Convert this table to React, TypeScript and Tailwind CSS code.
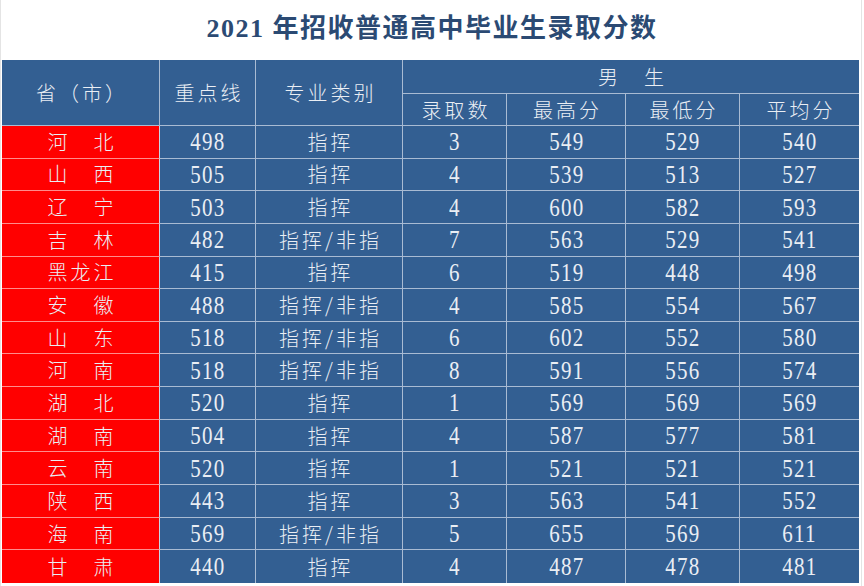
import React from "react";

const rows: [string, string, string, string, string, string, string][] = [
  ["河\u3000北", "498", "指挥", "3", "549", "529", "540"],
  ["山\u3000西", "505", "指挥", "4", "539", "513", "527"],
  ["辽\u3000宁", "503", "指挥", "4", "600", "582", "593"],
  ["吉\u3000林", "482", "指挥/非指", "7", "563", "529", "541"],
  ["黑龙江", "415", "指挥", "6", "519", "448", "498"],
  ["安\u3000徽", "488", "指挥/非指", "4", "585", "554", "567"],
  ["山\u3000东", "518", "指挥/非指", "6", "602", "552", "580"],
  ["河\u3000南", "518", "指挥/非指", "8", "591", "556", "574"],
  ["湖\u3000北", "520", "指挥", "1", "569", "569", "569"],
  ["湖\u3000南", "504", "指挥", "4", "587", "577", "581"],
  ["云\u3000南", "520", "指挥", "1", "521", "521", "521"],
  ["陕\u3000西", "443", "指挥", "3", "563", "541", "552"],
  ["海\u3000南", "569", "指挥/非指", "5", "655", "569", "611"],
  ["甘\u3000肃", "440", "指挥", "4", "487", "478", "481"],
];

const cols = "grid-cols-[158px_96px_147px_104px_119px_114px_119px]";

function Num({ v }: { v: string }) {
  return (
    <span className="inline-block origin-center scale-x-[0.84] pl-[1px] font-['Liberation_Serif',serif] text-[25px] leading-none tracking-[1.5px]">
      {v}
    </span>
  );
}

function Cjk({ v }: { v: string }) {
  return (
    <span className="pl-[3px] font-['Noto_Sans_CJK_SC',sans-serif] text-[20px] font-light leading-none tracking-[3px]">
      {v}
    </span>
  );
}

export default function App() {
  return (
    <div className="h-[586px] w-[864px] bg-white">
      <div className="h-[586px] w-[862px] border-l border-r border-[#e4e4e4] bg-white">
        <div className="flex h-[60px] items-center justify-center pb-[3px] pl-[2px]">
          <h1 className="font-['Liberation_Serif','Noto_Sans_CJK_SC',serif] text-[26px] font-bold tracking-[1.5px] text-[#2b4a73]">
            2021 年招收普通高中毕业生录取分数
          </h1>
        </div>
        <div className="ml-[1px] w-[857px] bg-[#335f92] text-[#eaeef4]">
          <div className={`grid ${cols} grid-rows-[34px_32px]`}>
            <div className="row-span-2 flex items-center justify-center border-b border-r border-[#a9bbd3]">
              <Cjk v="省（市）" />
            </div>
            <div className="row-span-2 flex items-center justify-center border-b border-r border-[#a9bbd3]">
              <Cjk v="重点线" />
            </div>
            <div className="row-span-2 flex items-center justify-center border-b border-r border-[#a9bbd3]">
              <Cjk v="专业类别" />
            </div>
            <div className="col-span-4 flex items-center justify-center border-b border-[#a9bbd3]">
              <Cjk v={"男\u3000生"} />
            </div>
            <div className="flex items-center justify-center border-b border-r border-[#a9bbd3]">
              <Cjk v="录取数" />
            </div>
            <div className="flex items-center justify-center border-b border-r border-[#a9bbd3]">
              <Cjk v="最高分" />
            </div>
            <div className="flex items-center justify-center border-b border-r border-[#a9bbd3]">
              <Cjk v="最低分" />
            </div>
            <div className="flex items-center justify-center border-b border-[#a9bbd3]">
              <Cjk v="平均分" />
            </div>
          </div>
          <div className="grid h-[457px] grid-rows-[repeat(14,minmax(0,1fr))]">
            {rows.map((r, i) => {
              const last = i === rows.length - 1;
              return (
                <div key={i} className={`grid ${cols}`}>
                  <div
                    className={`flex items-center justify-center border-r border-[#c9d4e3] bg-[#ff0000] ${
                      last ? "" : "border-b border-b-[#ff8c8c]"
                    }`}
                  >
                    <Cjk v={r[0]} />
                  </div>
                  <div className={`flex items-center justify-center border-r border-[#a9bbd3] ${last ? "" : "border-b"}`}>
                    <Num v={r[1]} />
                  </div>
                  <div className={`flex items-center justify-center border-r border-[#a9bbd3] ${last ? "" : "border-b"}`}>
                    <Cjk v={r[2]} />
                  </div>
                  <div className={`flex items-center justify-center border-r border-[#a9bbd3] ${last ? "" : "border-b"}`}>
                    <Num v={r[3]} />
                  </div>
                  <div className={`flex items-center justify-center border-r border-[#a9bbd3] ${last ? "" : "border-b"}`}>
                    <Num v={r[4]} />
                  </div>
                  <div className={`flex items-center justify-center border-r border-[#a9bbd3] ${last ? "" : "border-b"}`}>
                    <Num v={r[5]} />
                  </div>
                  <div className={`flex items-center justify-center border-[#a9bbd3] ${last ? "" : "border-b"}`}>
                    <Num v={r[6]} />
                  </div>
                </div>
              );
            })}
          </div>
        </div>
      </div>
    </div>
  );
}
